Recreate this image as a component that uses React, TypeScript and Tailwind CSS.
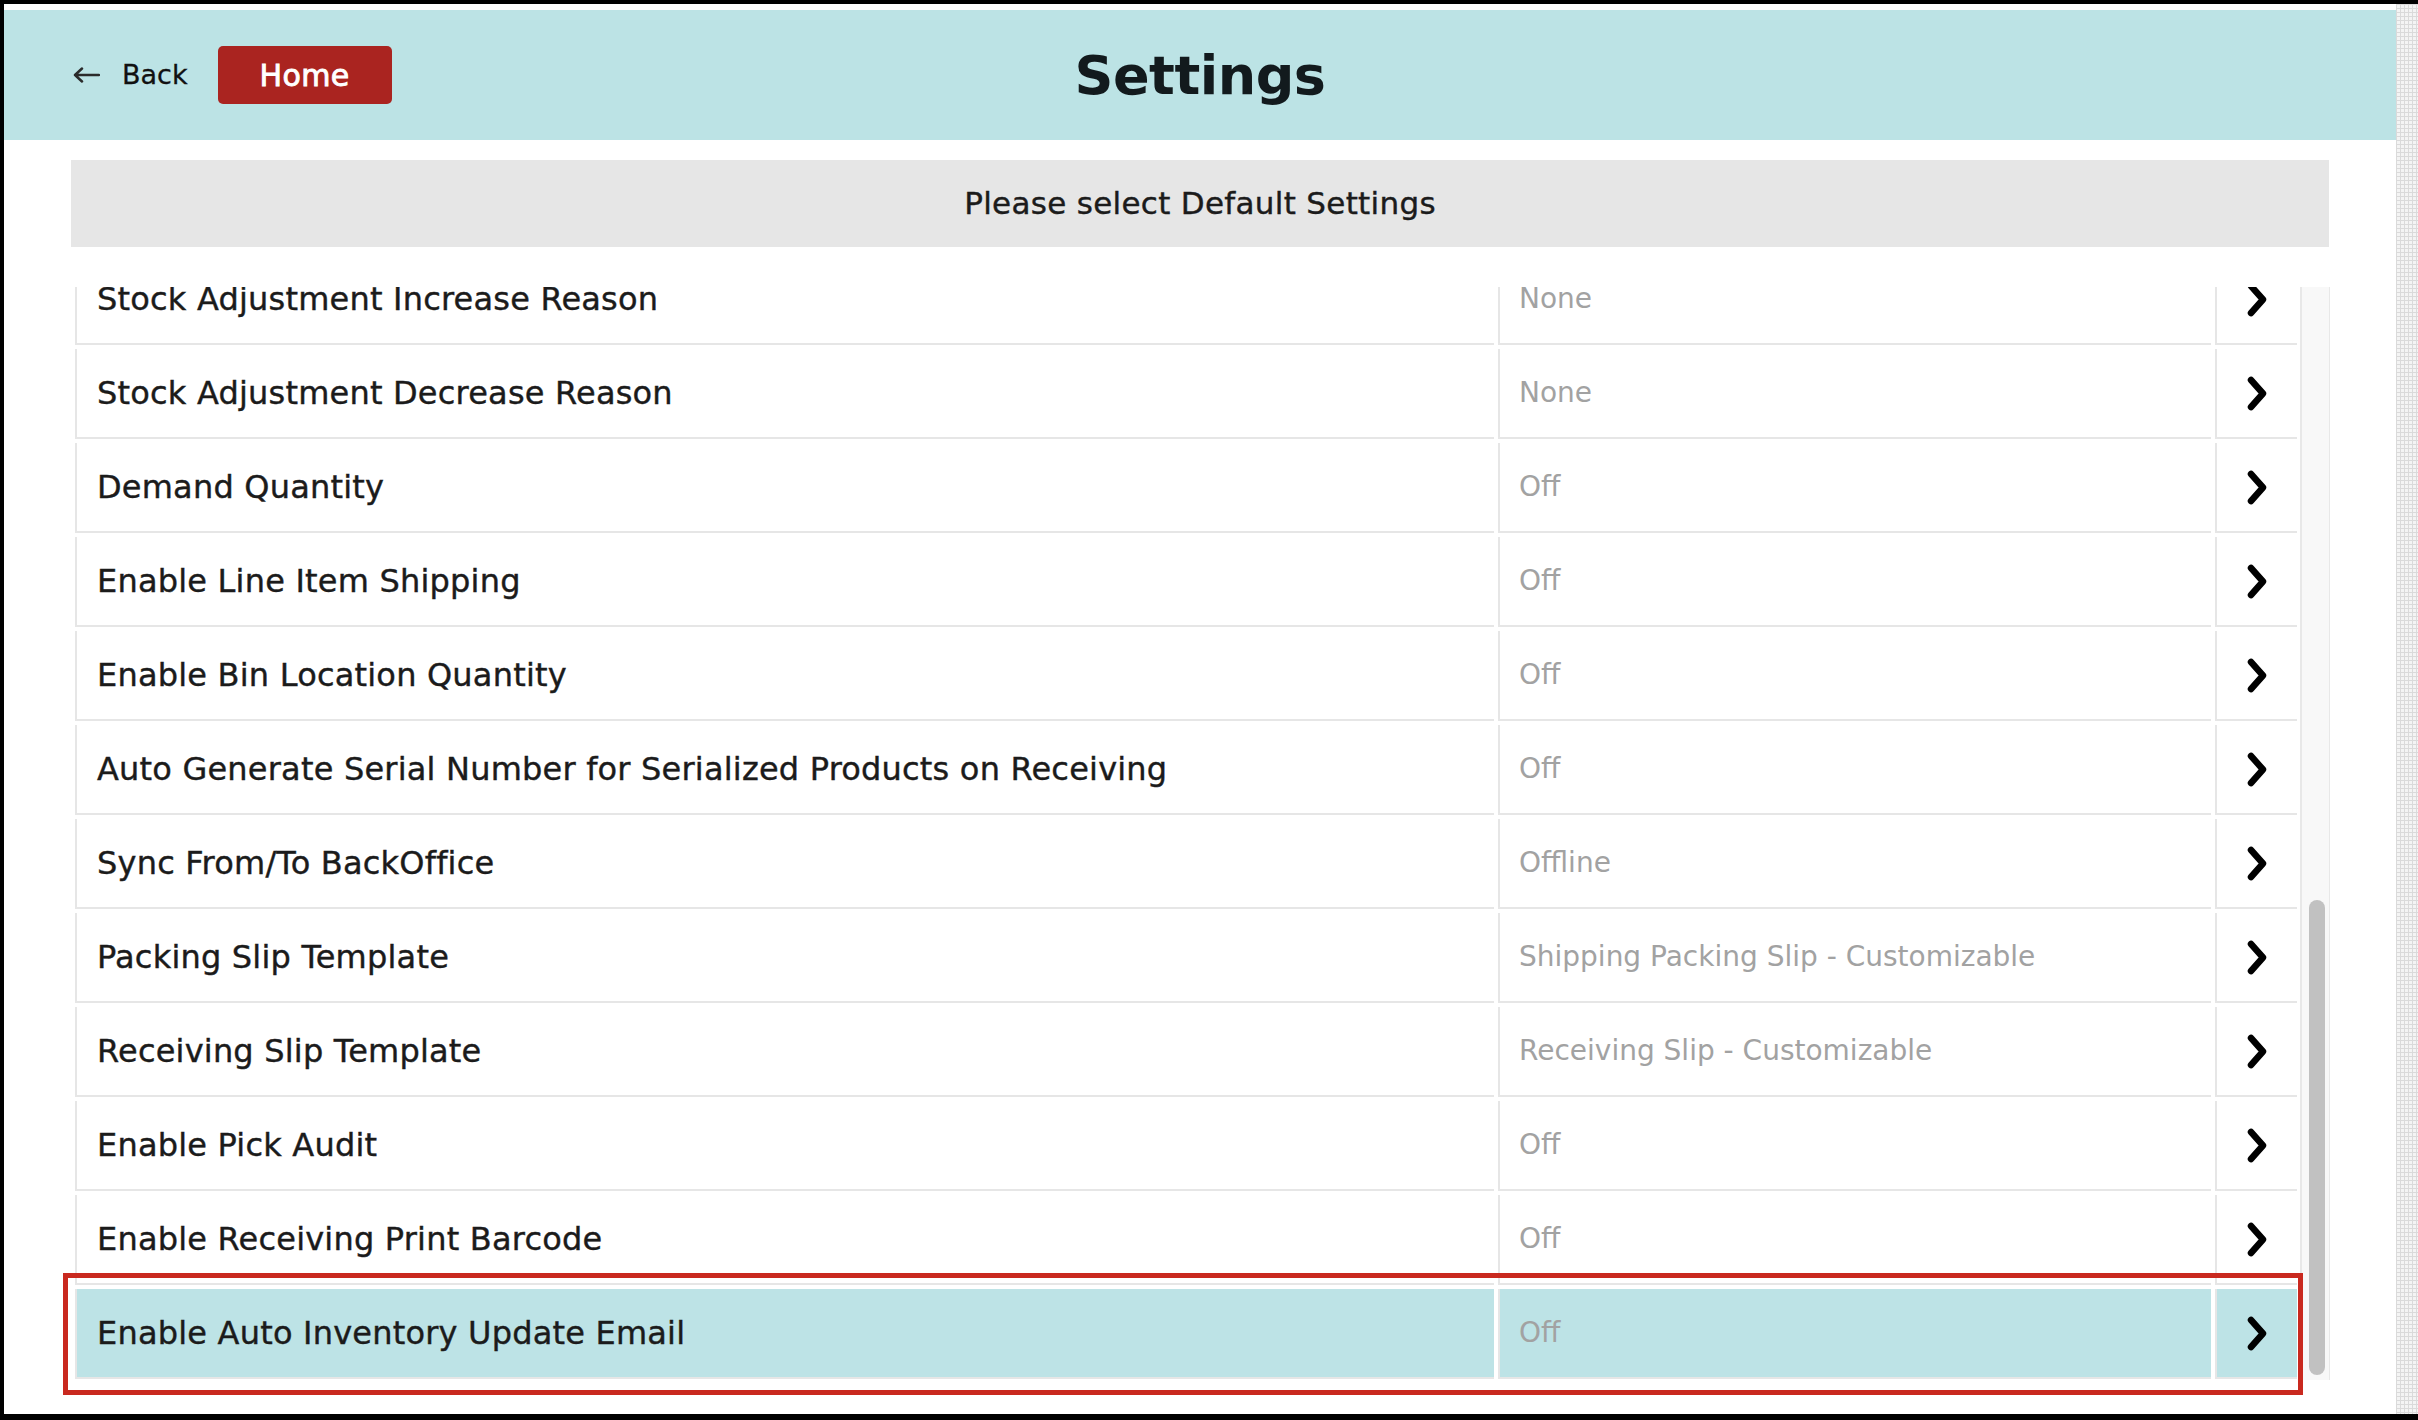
import React from "react";

type Row = { label: string; value: string; active?: boolean };

const ROWS: Row[] = [
  { label: "Stock Adjustment Increase Reason", value: "None" },
  { label: "Stock Adjustment Decrease Reason", value: "None" },
  { label: "Demand Quantity", value: "Off" },
  { label: "Enable Line Item Shipping", value: "Off" },
  { label: "Enable Bin Location Quantity", value: "Off" },
  { label: "Auto Generate Serial Number for Serialized Products on Receiving", value: "Off" },
  { label: "Sync From/To BackOffice", value: "Offline" },
  { label: "Packing Slip Template", value: "Shipping Packing Slip - Customizable" },
  { label: "Receiving Slip Template", value: "Receiving Slip - Customizable" },
  { label: "Enable Pick Audit", value: "Off" },
  { label: "Enable Receiving Print Barcode", value: "Off" },
  { label: "Enable Auto Inventory Update Email", value: "Off", active: true },
];

function Chevron() {
  return (
    <svg width="20" height="35" viewBox="0 0 20 35" fill="none">
      <path
        d="M4 4 L16 17.5 L4 31"
        stroke="#000"
        strokeWidth="6.5"
        strokeLinecap="round"
        strokeLinejoin="round"
      />
    </svg>
  );
}

function BackArrow() {
  return (
    <svg width="27" height="16" viewBox="0 0 27 16" fill="none">
      <path
        d="M26 8 H2 M9 1.5 L2 8 L9 14.5"
        stroke="#2b2b2b"
        strokeWidth="2.5"
        strokeLinecap="round"
        strokeLinejoin="round"
      />
    </svg>
  );
}

function SettingRow({ row }: { row: Row }) {
  const bg = row.active ? "bg-[#bde3e6]" : "bg-white";
  return (
    <div className="flex gap-[4px] shrink-0">
      <div className={`flex-1 h-[90px] flex items-center pl-[20px] border-l-2 border-b-2 border-[#e6e6e6] ${bg}`}>
        <span className="text-[32px] text-[#1b1b1b] tracking-[0.2px] whitespace-nowrap [-webkit-text-stroke:0.4px_#1b1b1b]">
          {row.label}
        </span>
      </div>
      <div className={`w-[713px] h-[90px] flex items-center pl-[19px] border-l-2 border-b-2 border-[#e6e6e6] ${bg}`}>
        <span className="text-[28px] text-[#a2a2a2] whitespace-nowrap">{row.value}</span>
      </div>
      <div className={`w-[82px] h-[90px] flex items-center justify-center border-l-2 border-b-2 border-[#e6e6e6] ${bg}`}>
        <Chevron />
      </div>
    </div>
  );
}

export default function App() {
  return (
    <div className="h-[1420px] w-full bg-black pt-[4px] pl-[4px] pb-[6px] flex font-['DejaVu_Sans',sans-serif]">
      <div className="flex-1 bg-white flex flex-col pt-[6px]">
        {/* Header */}
        <header className="h-[130px] bg-[#bce3e5] grid grid-cols-[1fr_auto_1fr] items-center">
          <div className="flex items-center pl-[69px]">
            <BackArrow />
            <span className="ml-[22px] text-[27px] text-[#111] [-webkit-text-stroke:0.3px_#111]">Back</span>
            <button className="ml-[30px] w-[174px] h-[58px] rounded-[5px] bg-[#aa2420] text-white text-[30px] tracking-[0.4px] [-webkit-text-stroke:0.9px_white]">
              Home
            </button>
          </div>
          <h1 className="text-[54px] font-bold text-[#121a1d] tracking-[-0.5px]">Settings</h1>
          <div />
        </header>

        {/* Sub header */}
        <div className="mt-[20px] mx-[67px] h-[87px] bg-[#e6e6e6] flex items-center justify-center">
          <span className="text-[31px] text-[#1b1b1b] tracking-[0.3px] [-webkit-text-stroke:0.4px_#1b1b1b]">
            Please select Default Settings
          </span>
        </div>

        {/* List */}
        <div className="relative mt-[40px] ml-[67px] mr-[66px] h-[1093px] flex gap-[3px]">
          <div className="flex-1 pl-[4px] h-full overflow-hidden flex flex-col justify-end gap-[4px] pb-[1px]">
            {ROWS.map((r) => (
              <SettingRow key={r.label} row={r} />
            ))}
          </div>
          <div className="w-[30px] h-full bg-[#f8f8f8] border-l-2 border-r border-[#e8e8e8] flex flex-col justify-end pb-[5px] pl-[7px]">
            <div className="w-[16px] h-[475px] rounded-full bg-[#c1c1c1]" />
          </div>

          {/* highlight annotation */}
          <div className="absolute left-[-8px] bottom-[-15px] w-[2240px] h-[122px] border-[5px] border-[#c9291f] pointer-events-none" />
        </div>
      </div>
      <div className="w-[22px] bg-[#f4f4f4] bg-[linear-gradient(90deg,#dadada_1px,transparent_1px),linear-gradient(#dadada_1px,transparent_1px)] bg-[length:4px_4px]" />
    </div>
  );
}
